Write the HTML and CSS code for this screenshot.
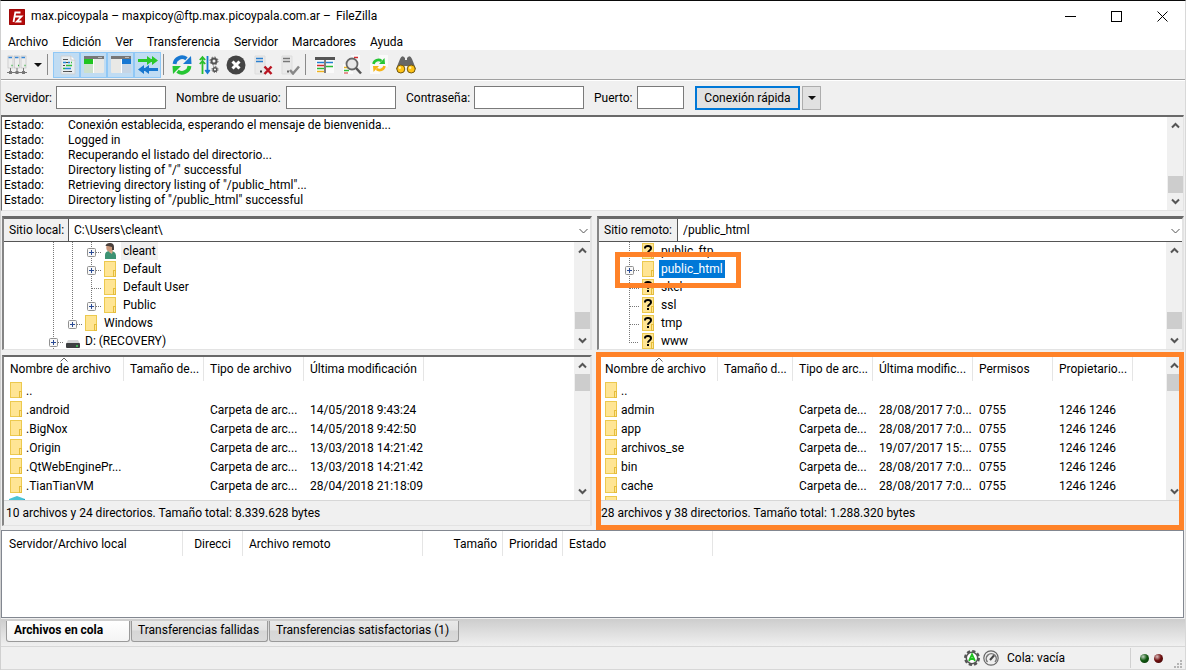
FILE: index.html
```html
<!DOCTYPE html>
<html lang="es">
<head>
<meta charset="utf-8">
<title>FileZilla</title>
<link rel="stylesheet" href="styles.css">
</head>
<body>
<svg class="sprite" aria-hidden="true">
  <symbol id="folder" viewBox="0 0 16 18">
    <rect x="1.5" y="1.5" width="11" height="15" fill="#ffe594" stroke="#ecc94f"/>
    <rect x="10.5" y="10.5" width="2" height="6" fill="#ffe594" stroke="#e5bd3c"/>
  </symbol>
  <symbol id="unknown" viewBox="0 0 16 18">
    <rect x="1.5" y="1.5" width="11" height="15" fill="#ffe594" stroke="#ecc94f"/>
    <rect x="10.5" y="10.5" width="2" height="6" fill="#ffe594" stroke="#e5bd3c"/>
    <path d="M4 6.500V6Q4 4 7 4t3 2.200Q10 7.500 8.500 8.500T7 10.800" fill="none" stroke="#000" stroke-width="2"/><path d="M6 12h2v2H6z" fill="#000"/>
  </symbol>
  <symbol id="user" viewBox="0 0 16 18">
    <path d="M2 17v-4q0-4 5-4 6 0 6 5v3z" fill="#3d9273"/><path d="M6 8h4l-1 4-3-2z" fill="#d9a98a"/>
    <ellipse cx="6.500" cy="5.500" rx="3.200" ry="4" fill="#c99679"/><path d="M2.500 4Q3 1 7 1t4 4v3L9 8V5L5 4z" fill="#49403c"/>
  </symbol>
  <symbol id="drive" viewBox="0 0 16 18">
    <path d="M3 8h10l2 4H1z" fill="#d5d6d7"/><rect x="1" y="11" width="14" height="5" rx="1" fill="#3d3f41"/><circle cx="12" cy="14" r="1" fill="#41d45a"/>
  </symbol>
  <symbol id="cube" viewBox="0 0 16 18"><path d="M0 4 8 1l8 3v11l-8 3-8-3z" fill="#49c3d6"/><path d="M8 7l8-3v11l-8 3z" fill="#239dc1"/></symbol>
  <symbol id="line" viewBox="0 0 19 18"><path d="M9.500 0v18" stroke="#777" stroke-dasharray="1 1"/></symbol>
  <symbol id="tee" viewBox="0 0 19 18"><path d="M9.500 0v18M10 10.500h9" stroke="#777" stroke-dasharray="1 1"/></symbol>
  <symbol id="corner" viewBox="0 0 19 18"><path d="M9.500 0v10M9 10.500h10" stroke="#777" stroke-dasharray="1 1"/></symbol>
  <symbol id="plus" viewBox="0 0 19 18">
    <path d="M9.500 0v18M14 10.500h5" stroke="#777" stroke-dasharray="1 1"/>
    <rect x="5.500" y="6.500" width="8" height="8" rx="1" fill="#f8f8f8" stroke="#919191"/><path d="M7 10.500h5M9.500 8v5" stroke="#294a94"/>
  </symbol>
  <symbol id="plus-end" viewBox="0 0 19 18">
    <path d="M9.500 0v6M14 10.500h5" stroke="#777" stroke-dasharray="1 1"/>
    <rect x="5.500" y="6.500" width="8" height="8" rx="1" fill="#f8f8f8" stroke="#919191"/><path d="M7 10.500h5M9.500 8v5" stroke="#294a94"/>
  </symbol>
  <symbol id="up" viewBox="0 0 9 7"><path d="M1 5.500 4.500 2 8 5.500" fill="none" stroke="#555" stroke-width="2"/></symbol>
  <symbol id="down" viewBox="0 0 9 7"><path d="M1 1.500 4.500 5 8 1.500" fill="none" stroke="#555" stroke-width="2"/></symbol>
  <symbol id="chevron" viewBox="0 0 9 6"><path d="M.5 1 4.500 5l4-4" fill="none" stroke="#555"/></symbol>
  <symbol id="sort" viewBox="0 0 8 5"><path d="M.5 4.500 4 1l3.500 3.500" fill="none" stroke="#666"/></symbol>
  <symbol id="caret" viewBox="0 0 8 4"><path d="M0 0h8L4 4z" fill="#111"/></symbol>
</svg>

<header class="titlebar">
  <svg class="logo" viewBox="0 0 16 16"><rect width="16" height="16" rx="1" fill="#b50b0b"/><rect x=".5" y=".5" width="15" height="15" fill="none" stroke="#8a0606" stroke-dasharray="1 1"/><path d="M4.500 13 6.300 3.500h5.200M5.500 7.500h3.500M8.500 7.500h4L7.800 12.500h4.700" fill="none" stroke="#fff" stroke-width="1.800"/></svg>
  <h1 class="title">max.picoypala – maxpicoy@ftp.max.picoypala.com.ar – <span class="app-name">FileZilla</span></h1>
  <div class="window-controls">
    <button aria-label="Minimizar"><svg viewBox="0 0 11 11"><path d="M0 5.500h11" stroke="#000"/></svg></button>
    <button aria-label="Maximizar"><svg viewBox="0 0 11 11"><rect x=".5" y=".5" width="10" height="10" fill="none" stroke="#000"/></svg></button>
    <button aria-label="Cerrar"><svg viewBox="0 0 11 11"><path d="m.5.5 10 10M10.500.5l-10 10" stroke="#000"/></svg></button>
  </div>
</header>

<nav class="menubar">
  <button>Archivo</button><button>Edición</button><button>Ver</button><button>Transferencia</button><button>Servidor</button><button>Marcadores</button><button>Ayuda</button>
</nav>

<div class="toolbar">
  <button class="tool" aria-label="Gestor de sitios"><svg viewBox="0 0 20 20"><g fill="#eee" stroke="#bbb" stroke-width=".6"><rect x="1" y="1" width="5" height="12"/><rect x="7.500" y="1" width="5" height="12"/><rect x="14" y="1" width="5" height="12"/></g><path d="M1.500 2.500h3.500M8 2.500h3.500M14.500 2.500H18" stroke="#3987d5" stroke-width="1.500"/><path d="M4.500 10.500h1M11 10.500h1M17.500 10.500h1" stroke="#2cae38" stroke-width="1.500"/><path d="M3.500 13v4M10 13v4M16.500 13v4M0 17.500h20" stroke="#777"/><path d="M2 16h3v3H2zM8.500 16h3v3h-3zM15 16h3v3h-3z" fill="#777"/></svg></button>
  <button class="tool-menu" aria-label="Abrir lista de sitios"><svg viewBox="0 0 8 4"><use href="#caret"/></svg></button>
  <span class="divider"></span>
  <div class="toggles">
    <button class="tool on" aria-pressed="true" aria-label="Registro de mensajes"><svg viewBox="0 0 20 20"><path d="M4 1h10l4 4v14H4z" fill="#e8edf0" stroke="#ccd1d5"/><path d="M14 1v4h4" fill="#fff" stroke="#bbb" stroke-width=".7"/><path d="M6 4.500h5M6 16.500h6" stroke="#555"/><path d="M6 7.500h3M11 7.500h2M8 13.500h6" stroke="#258bd8" stroke-width="1.500"/><path d="M9 10.500h6M6 13.500h2M14 7.500h1" stroke="#2bbf37" stroke-width="1.500"/><path d="M6 10.500h2M9 7.500h2M12 16.500h3" stroke="#444"/></svg></button>
    <button class="tool on" aria-pressed="true" aria-label="Árbol local"><svg viewBox="0 0 20 20"><rect y="1" width="20" height="17" rx="1" fill="#e9e9e6"/><path d="M0 1h20v3H0z" fill="#777"/><path d="M14 2.500h4" stroke="#bbb"/><path d="M0 4h9v5H0z" fill="#1fc51f"/><path d="M0 9h9v9H0z" fill="#cce0cc"/><path d="M9.500 4v14" stroke="#fff"/></svg></button>
    <button class="tool on" aria-pressed="true" aria-label="Árbol remoto"><svg viewBox="0 0 20 20"><rect y="1" width="20" height="17" rx="1" fill="#e9e9e6"/><path d="M0 1h20v3H0z" fill="#777"/><path d="M14 2.500h4" stroke="#bbb"/><path d="M11 4h9v5h-9z" fill="#1778d3"/><path d="M11 9h9v9h-9z" fill="#c6d5e5"/><path d="M10.500 4v14" stroke="#fff"/></svg></button>
    <button class="tool on" aria-pressed="true" aria-label="Cola de transferencia"><svg viewBox="0 0 20 20"><path d="M0 4h9V1l4 3h1V1l6 4.500-6 4.500V7h-1l-4 3V7H0z" fill="#29c829"/><path d="M20 13h-9v-3l-4 3H6v-3l-6 4.500L6 19v-3h1l4 3v-3h9z" fill="#1877cf"/></svg></button>
  </div>
  <span class="divider"></span>
  <button class="tool" aria-label="Actualizar"><svg viewBox="0 0 20 20"><path d="M2.500 9A7.500 7.500 0 0 1 14.500 3.800" fill="none" stroke="#1878d2" stroke-width="3.800"/><path d="m19 1 .5 8H11z" fill="#1878d2"/><path d="M17.500 11a7.500 7.500 0 0 1-12 5.200" fill="none" stroke="#26c634" stroke-width="3.800"/><path d="m1 19-.5-8H9z" fill="#26c634"/></svg></button>
  <button class="tool" aria-label="Procesar cola"><svg viewBox="0 0 20 20"><path d="M3.500 19V2M.8 5l2.700-3 2.700 3M.8 9l2.700-3 2.700 3" fill="none" stroke="#2cbf2c" stroke-width="1.800"/><path d="M8.500 1v17M6.300 15l2.200 3 2.200-3" fill="none" stroke="#1878d2" stroke-width="1.800"/><g fill="none" stroke="#555"><circle cx="15" cy="6" r="2.500" stroke-width="2"/><circle cx="15" cy="6" r="4" stroke-dasharray="1.500 1.640"/><circle cx="16" cy="14.500" r="1.800" stroke-width="1.500"/><circle cx="16" cy="14.500" r="3" stroke-dasharray="1.200 1.150"/></g></svg></button>
  <button class="tool" aria-label="Cancelar"><svg viewBox="0 0 20 20"><circle cx="10" cy="10" r="9.500" fill="#444"/><path d="m6.500 6.500 7 7m0-7-7 7" stroke="#fff" stroke-width="3"/></svg></button>
  <button class="tool" aria-label="Desconectar"><svg viewBox="0 0 20 20"><path d="M2 1h10v18H2z" fill="#e9e9e9" stroke="#ddd"/><path d="M3 3.500h7M3 6.500h7" stroke="#2b80cf" stroke-width="1.500"/><path d="M7 16.500h2" stroke="#333" stroke-width="2"/><path d="m11.500 11.500 7 7.500m0-7.500-7 7.500" stroke="#b91522" stroke-width="2.500"/></svg></button>
  <button class="tool" aria-label="Reconectar"><svg viewBox="0 0 20 20"><path d="M2 1h10v18H2z" fill="#e9e9e9" stroke="#ddd"/><path d="M3 3.500h7M3 6.500h7" stroke="#777" stroke-width="1.500"/><path d="M7 16.500h2" stroke="#666" stroke-width="2"/><path d="m10 15 3 3.500 6-7" fill="none" stroke="#888" stroke-width="2.500"/></svg></button>
  <span class="divider"></span>
  <button class="tool" aria-label="Filtros"><svg viewBox="0 0 20 20"><path d="M1 3h18v15H1z" fill="#fafafa"/><path d="M0 3.500h20" stroke="#555" stroke-width="3"/><path d="M2 7.500h7M11 7.500h7" stroke="#2180cf" stroke-width="1.500"/><path d="M2 10.500h7" stroke="#d32c30" stroke-width="1.500"/><path d="M2 13.500h7M11 11.500h7" stroke="#2abb36" stroke-width="1.500"/><path d="M2 16.500h7" stroke="#efb31f" stroke-width="1.500"/><path d="M10 3v15" stroke="#555" stroke-width="1.500"/></svg></button>
  <button class="tool" aria-label="Comparar directorios"><svg viewBox="0 0 20 20"><path d="M9 0h9v12H9zM1 9h10v10H1z" fill="#fafafa"/><path d="M12 2.500h4" stroke="#d32c30" stroke-width="1.500"/><path d="M2 12.500h5" stroke="#ebb421" stroke-width="1.500"/><path d="M2 15.500h5" stroke="#2abb36" stroke-width="1.500"/><path d="M2 18h4" stroke="#d32c30"/><circle cx="10" cy="9" r="5.500" fill="#e5e5e5" fill-opacity=".9" stroke="#666" stroke-width="1.800"/><path d="m14 13 5 5.500" stroke="#555" stroke-width="2.500"/></svg></button>
  <button class="tool" aria-label="Navegación sincronizada"><svg viewBox="0 0 20 20"><path d="M10 0h9v12h-9zM1 8h10v11H1z" fill="#fafafa"/><path d="M4.500 9a5 5 0 0 1 8-3" fill="none" stroke="#26c634" stroke-width="2.600"/><path d="m15.500 3 .5 6H10z" fill="#26c634"/><path d="M15.500 11a5 5 0 0 1-8 3" fill="none" stroke="#f6b416" stroke-width="2.600"/><path d="m4.500 17-.5-6h6z" fill="#f6b416"/></svg></button>
  <button class="tool" aria-label="Buscar"><svg viewBox="0 0 20 20"><path d="m0 14 4-10q2-5 5-1v2h2V3q3-4 5 1l4 10-8 2v-5H8v5z" fill="#666"/><circle cx="4.800" cy="14" r="4" fill="#ffc316" stroke="#71580f"/><circle cx="15.200" cy="14" r="4" fill="#ffc316" stroke="#71580f"/><circle cx="3.800" cy="12.800" r="1.200" fill="#fff0a8"/><circle cx="14.200" cy="12.800" r="1.200" fill="#fff0a8"/></svg></button>
</div>

<form class="quickconnect">
  <label class="q-host" for="host">Servidor:</label><input id="host" type="text">
  <label class="q-user" for="user-name">Nombre de usuario:</label><input id="user-name" type="text">
  <label class="q-pass" for="pass">Contraseña:</label><input id="pass" type="password">
  <label class="q-port" for="port">Puerto:</label><input id="port" class="port" type="text">
  <button class="connect" type="button">Conexión rápida</button>
  <button class="history" type="button" aria-label="Historial"><svg viewBox="0 0 8 4"><use href="#caret"/></svg></button>
</form>

<section class="log">
  <dl class="log-lines">
    <dt>Estado:</dt><dd>Conexión establecida, esperando el mensaje de bienvenida...</dd>
    <dt>Estado:</dt><dd>Logged in</dd>
    <dt>Estado:</dt><dd>Recuperando el listado del directorio...</dd>
    <dt>Estado:</dt><dd>Directory listing of "/" successful</dd>
    <dt>Estado:</dt><dd>Retrieving directory listing of "/public_html"...</dd>
    <dt>Estado:</dt><dd>Directory listing of "/public_html" successful</dd>
  </dl>
  <div class="scrollbar at-end"><svg viewBox="0 0 9 7"><use href="#up"/></svg><span class="thumb"></span><svg viewBox="0 0 9 7"><use href="#down"/></svg></div>
</section>

<main class="browser">
  <section class="pane">
    <div class="frame">
      <div class="site"><label for="local">Sitio local:</label><div class="combo"><select id="local"><option>C:\Users\cleant\</option></select><svg viewBox="0 0 9 6"><use href="#chevron"/></svg></div></div>
      <div class="scroller tree-view">
        <ul class="tree local-tree">
          <li><svg class="cell"><use href="#line"/></svg><svg class="cell"><use href="#line"/></svg><svg class="cell"><use href="#plus"/></svg><svg class="icon"><use href="#user"/></svg><span class="current">cleant</span></li>
          <li><svg class="cell"><use href="#line"/></svg><svg class="cell"><use href="#line"/></svg><svg class="cell"><use href="#plus"/></svg><svg class="icon"><use href="#folder"/></svg><span>Default</span></li>
          <li><svg class="cell"><use href="#line"/></svg><svg class="cell"><use href="#line"/></svg><svg class="cell"><use href="#tee"/></svg><svg class="icon"><use href="#folder"/></svg><span>Default User</span></li>
          <li><svg class="cell"><use href="#line"/></svg><svg class="cell"><use href="#line"/></svg><svg class="cell"><use href="#plus-end"/></svg><svg class="icon"><use href="#folder"/></svg><span>Public</span></li>
          <li><svg class="cell"><use href="#line"/></svg><svg class="cell"><use href="#plus-end"/></svg><svg class="icon"><use href="#folder"/></svg><span>Windows</span></li>
          <li><svg class="cell"><use href="#plus"/></svg><svg class="icon"><use href="#drive"/></svg><span>D: (RECOVERY)</span></li>
        </ul>
        <div class="scrollbar at-end"><svg viewBox="0 0 9 7"><use href="#up"/></svg><span class="thumb"></span><svg viewBox="0 0 9 7"><use href="#down"/></svg></div>
      </div>
    </div>
    <div class="frame files">
      <div class="scroller list-view">
        <div class="list">
          <table>
            <colgroup><col class="w-name-l"><col class="w80"><col class="w100"><col class="w120"><col></colgroup>
            <thead><tr><th class="sorted">Nombre de archivo<svg viewBox="0 0 8 5"><use href="#sort"/></svg></th><th>Tamaño de...</th><th>Tipo de archivo</th><th>Última modificación</th><th></th></tr></thead>
            <tbody>
              <tr><td><svg class="icon"><use href="#folder"/></svg>..</td><td></td><td></td><td></td><td></td></tr>
              <tr><td><svg class="icon"><use href="#folder"/></svg>.android</td><td></td><td>Carpeta de arc...</td><td>14/05/2018 9:43:24</td><td></td></tr>
              <tr><td><svg class="icon"><use href="#folder"/></svg>.BigNox</td><td></td><td>Carpeta de arc...</td><td>14/05/2018 9:42:50</td><td></td></tr>
              <tr><td><svg class="icon"><use href="#folder"/></svg>.Origin</td><td></td><td>Carpeta de arc...</td><td>13/03/2018 14:21:42</td><td></td></tr>
              <tr><td><svg class="icon"><use href="#folder"/></svg>.QtWebEnginePr...</td><td></td><td>Carpeta de arc...</td><td>13/03/2018 14:21:42</td><td></td></tr>
              <tr><td><svg class="icon"><use href="#folder"/></svg>.TianTianVM</td><td></td><td>Carpeta de arc...</td><td>28/04/2018 21:18:09</td><td></td></tr>
              <tr><td><svg class="icon"><use href="#cube"/></svg></td><td></td><td></td><td></td><td></td></tr>
            </tbody>
          </table>
        </div>
        <div class="scrollbar at-start"><svg viewBox="0 0 9 7"><use href="#up"/></svg><span class="thumb"></span><svg viewBox="0 0 9 7"><use href="#down"/></svg></div>
      </div>
      <p class="summary">10 archivos y 24 directorios. Tamaño total: 8.339.628 bytes</p>
    </div>
  </section>

  <section class="pane">
    <div class="frame">
      <div class="site remote"><label for="remote">Sitio remoto:</label><div class="combo"><select id="remote"><option>/public_html</option></select><svg viewBox="0 0 9 6"><use href="#chevron"/></svg></div></div>
      <div class="scroller tree-view">
        <ul class="tree remote-tree">
          <li><svg class="cell"><use href="#tee"/></svg><svg class="icon"><use href="#unknown"/></svg><span>public_ftp</span></li>
          <li class="marked"><svg class="cell"><use href="#plus"/></svg><svg class="icon"><use href="#folder"/></svg><span class="selected">public_html</span></li>
          <li><svg class="cell"><use href="#tee"/></svg><svg class="icon"><use href="#unknown"/></svg><span>skel</span></li>
          <li><svg class="cell"><use href="#tee"/></svg><svg class="icon"><use href="#unknown"/></svg><span>ssl</span></li>
          <li><svg class="cell"><use href="#tee"/></svg><svg class="icon"><use href="#unknown"/></svg><span>tmp</span></li>
          <li><svg class="cell"><use href="#corner"/></svg><svg class="icon"><use href="#unknown"/></svg><span>www</span></li>
        </ul>
        <div class="scrollbar at-end"><svg viewBox="0 0 9 7"><use href="#up"/></svg><span class="thumb"></span><svg viewBox="0 0 9 7"><use href="#down"/></svg></div>
      </div>
    </div>
    <div class="frame files outlined">
      <div class="scroller list-view">
        <div class="list">
          <table>
            <colgroup><col class="w-name-r"><col class="w75"><col class="w80"><col class="w100"><col class="w80"><col class="w80"><col></colgroup>
            <thead><tr><th class="sorted">Nombre de archivo<svg viewBox="0 0 8 5"><use href="#sort"/></svg></th><th>Tamaño d...</th><th>Tipo de arc...</th><th>Última modific...</th><th>Permisos</th><th>Propietario...</th><th></th></tr></thead>
            <tbody>
              <tr><td><svg class="icon"><use href="#folder"/></svg>..</td><td></td><td></td><td></td><td></td><td></td><td></td></tr>
              <tr><td><svg class="icon"><use href="#folder"/></svg>admin</td><td></td><td>Carpeta de...</td><td>28/08/2017 7:0...</td><td>0755</td><td>1246 1246</td><td></td></tr>
              <tr><td><svg class="icon"><use href="#folder"/></svg>app</td><td></td><td>Carpeta de...</td><td>28/08/2017 7:0...</td><td>0755</td><td>1246 1246</td><td></td></tr>
              <tr><td><svg class="icon"><use href="#folder"/></svg>archivos_se</td><td></td><td>Carpeta de...</td><td>19/07/2017 15:...</td><td>0755</td><td>1246 1246</td><td></td></tr>
              <tr><td><svg class="icon"><use href="#folder"/></svg>bin</td><td></td><td>Carpeta de...</td><td>28/08/2017 7:0...</td><td>0755</td><td>1246 1246</td><td></td></tr>
              <tr><td><svg class="icon"><use href="#folder"/></svg>cache</td><td></td><td>Carpeta de...</td><td>28/08/2017 7:0...</td><td>0755</td><td>1246 1246</td><td></td></tr>
              <tr><td><svg class="icon"><use href="#folder"/></svg></td><td></td><td></td><td></td><td></td><td></td><td></td></tr>
            </tbody>
          </table>
        </div>
        <div class="scrollbar at-start"><svg viewBox="0 0 9 7"><use href="#up"/></svg><span class="thumb"></span><svg viewBox="0 0 9 7"><use href="#down"/></svg></div>
      </div>
      <p class="summary">28 archivos y 38 directorios. Tamaño total: 1.288.320 bytes</p>
    </div>
  </section>
</main>

<section class="queue">
  <table>
    <colgroup><col class="w181"><col class="w60"><col class="w180"><col class="w80"><col class="w60"><col class="w150"><col></colgroup>
    <thead><tr><th>Servidor/Archivo local</th><th class="center">Direcci</th><th>Archivo remoto</th><th class="right">Tamaño</th><th>Prioridad</th><th>Estado</th><th></th></tr></thead>
  </table>
</section>

<div class="tabs" role="tablist">
  <button role="tab" class="tab active" aria-selected="true">Archivos en cola</button>
  <button role="tab" class="tab failed">Transferencias fallidas</button>
  <button role="tab" class="tab done">Transferencias satisfactorias (1)</button>
</div>

<footer class="statusbar">
  <svg class="status-icon" viewBox="0 0 16 16"><circle cx="8" cy="8" r="6.800" fill="none" stroke="#555" stroke-width="2.400" stroke-dasharray="3.200 2.140"/><circle cx="8" cy="8" r="5.700" fill="#fff" stroke="#555" stroke-width="1.500"/><path d="m5 11 3-6.500 3 6.500M6.500 9h3" fill="none" stroke="#20c321" stroke-width="1.800"/></svg>
  <svg class="status-icon" viewBox="0 0 16 16"><circle cx="8" cy="8" r="7.200" fill="#eee" stroke="#666" stroke-width="1.200"/><path d="M4.500 12a5 5 0 1 1 7.500 0" fill="none" stroke="#777" stroke-width="1.500"/><path d="m7 10 4-4.500" stroke="#444" stroke-width="2"/></svg>
  <span class="queue-state">Cola: vacía</span>
  <span class="leds"><i class="led green"></i><i class="led red"></i></span>
  <svg class="grip" viewBox="0 0 9 9"><path d="M6 0h2v2H6zM3 3h2v2H3zM6 3h2v2H6zM0 6h2v2H0zM3 6h2v2H3zM6 6h2v2H6z" fill="#b5b5b5"/></svg>
</footer>
</body>
</html>
```
FILE: styles.css
```css
* { box-sizing: border-box; }

body {
  margin: 0;
  min-height: 100vh;
  display: flex;
  flex-direction: column;
  background: #f0f0f0;
  border-top: 1px solid #0a0a0a;
  border-left: 1px solid #d0d0d0;
  border-right: 1px solid #d8d8d8;
  font: 12px/15px Roboto, "Open Sans", sans-serif;
  color: #000;
}

button, input, select { font: inherit; color: inherit; }
button { border: 0; padding: 0; background: none; }
svg { display: block; flex: none; }
.sprite { display: none; }

/* Title and menu */
.titlebar {
  display: flex;
  align-items: center;
  height: 31px;
  padding-left: 8px;
  background: #fff;
}
.logo { width: 16px; height: 16px; }
.title { flex: 1; margin: 0 0 0 6px; font: inherit; white-space: nowrap; }
.app-name { margin-left: 2px; }
.window-controls { display: flex; }
.window-controls button {
  display: flex;
  align-items: center;
  justify-content: center;
  width: 46px;
  height: 30px;
}
.window-controls svg { width: 11px; height: 11px; }

.menubar { display: flex; gap: 14px; padding: 3px 7px 0; background: #fff; }

/* Toolbar */
.toolbar {
  display: flex;
  align-items: center;
  height: 30px;
  padding-left: 2px;
  border-bottom: 1px solid #a0a0a0;
}
.tool {
  display: flex;
  align-items: center;
  justify-content: center;
  width: 27px;
  height: 26px;
}
.tool svg { width: 20px; height: 20px; }
.tool-menu { width: 15px; display: flex; justify-content: center; }
.tool-menu svg, .history svg { width: 8px; height: 4px; }
.toggles { display: flex; }
.tool.on { background: #c0dcf3; border: 1px solid #90c8f6; }
.divider { width: 1px; height: 21px; margin: 0 5px 0 2px; background: #8a8a8a; }
.toggles + .divider { margin-right: 4px; }

/* Quick connect */
.quickconnect {
  display: flex;
  align-items: center;
  height: 35px;
  padding: 0 4px 1px;
  border-top: 1px solid #fff;
}
.quickconnect label { padding-top: 2px; white-space: nowrap; }
.quickconnect input {
  width: 110px;
  height: 23px;
  margin-right: 10px;
  border: 1px solid #7a7a7a;
  background: #fff;
}
.quickconnect .port { width: 47px; }
.q-host { width: 51px; }
.q-user { width: 110px; }
.q-pass { width: 68px; }
.q-port { width: 43px; }
.connect {
  width: 105px;
  height: 24px;
  margin-left: 1px;
  padding-top: 1px;
  border: 2px solid #0078d7;
  background: #e1e1e1;
}
.history {
  display: flex;
  align-items: center;
  justify-content: center;
  width: 19px;
  height: 24px;
  margin-left: 2px;
  border: 1px solid #adadad;
  background: #e1e1e1;
}

/* Scroll bars */
.scrollbar {
  display: flex;
  flex-direction: column;
  align-items: center;
  flex: none;
  width: 16px;
  padding: 5px 0;
  background: #f0f0f0;
}
.scrollbar svg { width: 9px; height: 7px; }
.thumb { width: 15px; height: 17px; background: #cdcdcd; }
.at-end .thumb { margin: auto 0 5px; }
.tree-view .thumb { margin-bottom: 8px; }
.at-start .thumb { margin: 5px 0 auto; }

/* Message log */
.log {
  display: flex;
  margin-right: 1px;
  border: 1px solid #e3e3e3;
  border-top: 2px solid #696969;
  border-left: 1px solid #696969;
  background: #fff;
}
.log-lines {
  flex: 1;
  display: grid;
  grid-template-columns: 64px 1fr;
  align-content: start;
  margin: 0;
  padding: 1px 2px 2px;
}
.log-lines dd { margin: 0; }

/* Local and remote panes */
.browser {
  display: grid;
  grid-template-columns: 590fr 587fr;
  gap: 5px;
  padding: 5px 1px 1px;
}
.pane { display: flex; flex-direction: column; gap: 5px; min-width: 0; }
.frame {
  border: 2px solid #e3e3e3;
  border-top: 3px solid #696969;
  border-left: 2px solid #858585;
  border-bottom-width: 1px;
  background: #fff;
}
.site {
  display: flex;
  height: 23px;
  border-bottom: 1px solid #555;
}
.site label {
  width: 65px;
  padding: 4px 0 0 5px;
  border-right: 1px solid #555;
  background: #f0f0f0;
  white-space: nowrap;
}
.site.remote label { width: 79px; }
.combo { position: relative; flex: 1; }
.combo select {
  width: 100%;
  height: 22px;
  padding: 1px 16px 0 5px;
  border: 0;
  background: transparent;
  appearance: none;
}
.combo svg { position: absolute; right: 2px; top: 9px; width: 9px; height: 6px; pointer-events: none; }

.scroller { display: flex; overflow: hidden; }
.tree-view { height: 107px; }
.list-view { height: 143px; }
.list { flex: 1; min-width: 0; overflow: hidden; }

.tree { flex: 1; margin: 0; padding: 0; list-style: none; }
.local-tree { padding-left: 40px; }
.remote-tree { padding-left: 21px; }
.tree li { display: flex; height: 18px; width: max-content; }
.cell { width: 19px; height: 18px; }
.icon { width: 16px; height: 18px; }
.tree .icon { margin-left: 2px; }
.tree span { margin-left: 2px; padding: 2px 2px 1px; height: 18px; }
.tree .current { background: #f0f0f0; }
.tree .selected { background: #0078d7; color: #fff; }
.marked { position: relative; }
.marked::after {
  content: "";
  position: absolute;
  inset: -8px -16px -10px -5px;
  border: 5px solid #ff8228;
}

table { width: 100%; table-layout: fixed; border-collapse: separate; border-spacing: 0; }
th, td { padding: 0 0 0 6px; font-weight: normal; text-align: left; white-space: nowrap; }
th { height: 24px; padding-top: 1px; border-right: 1px solid #e5e5e5; }
th:last-child { border-right: 0; }
td { height: 19px; padding-top: 1px; line-height: 18px; }
td .icon { display: inline-block; vertical-align: top; margin: -1px 1px 0 -1px; }
.sorted { position: relative; }
.sorted svg { position: absolute; left: 56px; top: 0; width: 8px; height: 5px; }

.w-name-l { width: 120px; }
.w-name-r { width: 119px; }
.w60 { width: 60px; }
.w75 { width: 75px; }
.w80 { width: 80px; }
.w100 { width: 100px; }
.w120 { width: 120px; }
.w150 { width: 150px; }
.w180 { width: 180px; }
.w181 { width: 181px; }

.files { border-top-width: 2px; }
.summary {
  margin: 0;
  padding: 5px 2px 4px;
  border-top: 1px solid #d7d7d7;
  background: #f0f0f0;
}
.outlined { position: relative; }
.outlined::after {
  content: "";
  position: absolute;
  inset: -5px -2px -5px -3px;
  border: 5px solid #ff8228;
}

/* Transfer queue */
.queue {
  flex: 1;
  margin: 3px 1px 0 0;
  border: 1px solid #828790;
  background: #fff;
}
.queue th { height: 25px; padding-top: 2px; }
.queue th:first-child { padding-left: 7px; }
.queue .center { padding-left: 0; text-align: center; }
.queue .right { padding-right: 5px; text-align: right; }

.tabs {
  display: flex;
  align-items: flex-start;
  gap: 1px;
  height: 27px;
  margin-top: 1px;
  padding: 2px 5px 0;
  background: linear-gradient(#cdcdcd, #f0f0f0);
}
.tab {
  height: 21px;
  padding: 0 6px 2px;
  border: 1px solid #9a9a9a;
  border-top: 0;
  border-radius: 0 0 3px 3px;
  background: linear-gradient(#e9e9e9, #e2e2e2 45%, #d6d6d6 50%, #dadada);
  text-align: left;
}
.tab.active { min-width: 124px; padding-left: 7px; background: linear-gradient(#fff, #f4f4f4); font-weight: bold; }
.tab.failed { min-width: 137px; }
.tab.done { min-width: 190px; }

/* Status bar */
.statusbar {
  display: flex;
  align-items: center;
  height: 24px;
  padding-right: 2px;
  border-top: 1px solid #d7d7d7;
  border-bottom: 1px solid #d7d7d7;
}
.status-icon { width: 16px; height: 16px; margin-right: 3px; }
.status-icon:first-child { margin-left: auto; }
.queue-state { width: 128px; padding-left: 5px; }
.leds {
  display: flex;
  gap: 5px;
  align-items: center;
  height: 20px;
  padding: 0 11px 0 9px;
  border-left: 1px solid #d0d0d0;
}
.led { width: 9px; height: 9px; border-radius: 50%; }
.green { background: radial-gradient(circle at 35% 30%, #bfd0bf, #125a12 45%, #022c02); }
.red { background: radial-gradient(circle at 35% 30%, #d9bcbc, #701010 45%, #300202); }
.grip { width: 9px; height: 9px; align-self: flex-end; }
```
